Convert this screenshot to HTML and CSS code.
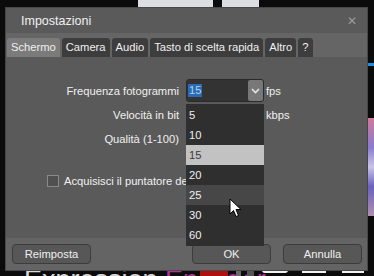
FILE: index.html
```html
<!DOCTYPE html>
<html lang="it">
<head>
    <meta charset="UTF-8">
    <title>Impostazioni</title>
    <link rel="stylesheet" href="styles.css">
</head>
<body>
    <div class="desktop">
        <!-- bits of the app behind the dialog -->
        <div class="bg-top">
            <span class="bg-pane pane-a"></span>
            <span class="bg-pane pane-b"></span>
        </div>
        <div class="bg-side">
            <span class="side-line"></span>
            <span class="side-picture"></span>
        </div>
        <div class="bg-bottom">
            <span class="brand">Expression <em>Encoder</em></span>
            <span class="tool red"></span>
            <span class="tool sq"></span>
            <span class="tool sq2"></span>
            <span class="tool white w1"></span>
            <span class="tool white w2"></span>
            <span class="tool white w3"></span>
        </div>

        <div class="dialog">
            <div class="dialog-title">
                <span>Impostazioni</span>
                <span class="close">&#x2715;</span>
            </div>
            <div class="tabs">
                <span class="tab active">Schermo</span>
                <span class="tab">Camera</span>
                <span class="tab">Audio</span>
                <span class="tab">Tasto di scelta rapida</span>
                <span class="tab">Altro</span>
                <span class="tab">?</span>
            </div>
            <div class="dialog-body">
                <div class="form">
                    <label class="field-label">Frequenza fotogrammi</label>
                    <div class="field">
                        <div class="combo">
                            <span class="combo-value"><span class="sel">15</span></span>
                            <span class="combo-btn">
                                <svg width="9" height="6" viewBox="0 0 9 6"><path d="M1 1 L4.5 4.5 L8 1" fill="none" stroke="#e6e6e6" stroke-width="1.6"/></svg>
                            </span>
                            <ul class="combo-list">
                                <li>5</li>
                                <li>10</li>
                                <li class="selected">15</li>
                                <li>20</li>
                                <li class="hover">25</li>
                                <li>30</li>
                                <li>60</li>
                            </ul>
                        </div>
                        <span class="unit">fps</span>
                    </div>
                    <label class="field-label">Velocità in bit</label>
                    <div class="field"><span class="spacer"></span><span class="unit">kbps</span></div>
                    <label class="field-label">Qualità (1-100)</label>
                    <div class="field"></div>
                </div>
                <div class="check-row">
                    <span class="checkbox"></span>
                    <span>Acquisisci il puntatore del mouse</span>
                </div>
            </div>
            <div class="dialog-footer">
                <button class="btn">Reimposta</button>
                <span class="grow"></span>
                <button class="btn">OK</button>
                <button class="btn">Annulla</button>
            </div>
        </div>

        <svg class="cursor" width="13" height="20" viewBox="0 0 13 20">
            <path d="M1 1 L1 16 L4.5 12.5 L7 18.5 L9.5 17.5 L7 11.5 L12 11.5 Z" fill="#fff" stroke="#000" stroke-width="1"/>
        </svg>
    </div>
</body>
</html>
```

FILE: styles.css
```css
body {
    margin: 0;
    background-color: #0b0b0b;
    font-family: "Liberation Sans", Arial, sans-serif;
    font-size: 11.2px;
    overflow: hidden;
}
.desktop {
    position: relative;
    width: 374px;
    height: 276px;
    overflow: hidden;
}
.bg-pane {
    position: absolute;
    top: 0;
    height: 8px;
    background-color: #dcdee4;
}
.pane-a {
    left: 138px;
    width: 75px;
}
.pane-b {
    left: 222px;
    width: 37px;
}
.side-line {
    position: absolute;
    left: 368px;
    top: 63px;
    width: 6px;
    height: 3px;
    background-color: #1e8fe0;
}
.side-picture {
    position: absolute;
    left: 368px;
    top: 118px;
    width: 6px;
    height: 98px;
    background: linear-gradient(#d07a9a, #8a7bd0 30%, #c9c3e8 50%, #6a60c0 70%, #b090b0);
}
.bg-bottom {
    position: absolute;
    left: 0;
    top: 270px;
    width: 374px;
    height: 6px;
    overflow: hidden;
}
.brand {
    position: absolute;
    left: 24px;
    top: -4px;
    font-size: 27px;
    line-height: 28px;
    color: #d8d8d8;
}
.brand em {
    font-style: normal;
    color: #b0309c;
}
.tool {
    position: absolute;
    top: 0;
    height: 6px;
}
.red {
    left: 200px;
    width: 28px;
    background-color: #b01010;
}
.sq {
    left: 236px;
    width: 5px;
    background-color: #6a6a6a;
}
.sq2 {
    left: 247px;
    width: 7px;
    background-color: #555;
}
.white {
    height: 3px;
    background-color: #f2f2f2;
}
.w1 { left: 262px; width: 26px; border-radius: 0 0 10px 10px; }
.w2 { left: 302px; width: 24px; }
.w3 { left: 342px; width: 22px; }

.dialog {
    position: absolute;
    left: 6px;
    top: 8px;
    width: 361px;
    height: 262px;
    display: flex;
    flex-direction: column;
    background-color: #5a5a5a;
    color: #f0f0f0;
    box-shadow: 0 0 0 1px #474747;
}
.dialog-title {
    height: 25px;
    display: flex;
    align-items: center;
    justify-content: space-between;
    padding: 0 10px 0 15px;
    font-size: 12.5px;
}
.close {
    color: #9a9a9a;
    font-size: 12px;
}
.tabs {
    height: 24px;
    box-sizing: border-box;
    padding: 5px 0 0 1px;
    display: flex;
    gap: 2px;
    background-color: #656565;
}
.tab {
    padding: 0 4px;
    line-height: 19px;
    background-color: #3d3d3d;
    border-radius: 3px 3px 0 0;
}
.tab.active {
    background-color: #7b7b7b;
}
.dialog-body {
    flex: 1;
    padding-top: 22px;
}
.form {
    display: grid;
    grid-template-columns: 173px 1fr;
    grid-auto-rows: 24px;
    column-gap: 7px;
}
.field-label {
    text-align: right;
    line-height: 24px;
}
.field {
    display: flex;
    align-items: flex-start;
    gap: 2px;
}
.unit {
    line-height: 24px;
}
.spacer {
    width: 78px;
}
.combo {
    position: relative;
    width: 78px;
    height: 23px;
    box-sizing: border-box;
    display: flex;
    align-items: center;
    background-color: #333;
    border: 1px solid #2a2a2a;
    border-radius: 3px;
}
.combo-value {
    flex: 1;
    padding-left: 1px;
}
.sel {
    display: inline-block;
    padding: 0 1px;
    line-height: 13px;
    background-color: #2d6bb0;
    color: #a8d4ff;
}
.combo-btn {
    width: 15px;
    height: 21px;
    display: flex;
    align-items: center;
    justify-content: center;
    background-color: #787878;
    border-radius: 2px;
}
.combo-list {
    position: absolute;
    left: -1px;
    top: 24px;
    width: 78px;
    margin: 0;
    padding: 1px 0;
    list-style: none;
    background-color: #2f2f2f;
    z-index: 2;
}
.combo-list li {
    height: 20px;
    line-height: 20px;
    padding-left: 3px;
}
.combo-list .selected {
    background-color: #c2c2c2;
    color: #3a3a3a;
}
.combo-list .hover {
    background-color: #474747;
}
.check-row {
    display: flex;
    align-items: center;
    gap: 5px;
    width: 139px;
    margin: 24px 0 0 41px;
    white-space: nowrap;
    overflow: hidden;
}
.checkbox {
    flex-shrink: 0;
    width: 10px;
    height: 10px;
    border: 1px solid #8a8a8a;
    background-color: #505050;
}
.dialog-footer {
    height: 32px;
    box-sizing: border-box;
    display: flex;
    align-items: center;
    gap: 12px;
    padding: 0 5px 0 6px;
    background-color: #646464;
}
.grow {
    flex: 1;
}
.btn {
    width: 79px;
    height: 20px;
    font-family: inherit;
    font-size: 11.2px;
    color: #f0f0f0;
    background-color: #575757;
    border: 1px solid #3c3c3c;
    border-radius: 4px;
}
.cursor {
    position: absolute;
    left: 229px;
    top: 198px;
    z-index: 3;
}
```
